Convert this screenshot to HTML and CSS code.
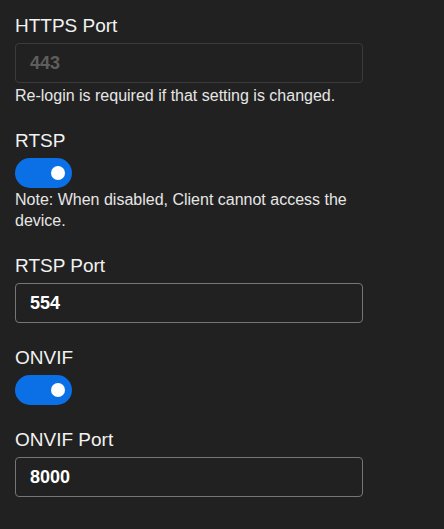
FILE: index.html
```html
<!DOCTYPE html>
<html lang="en">
<head>
<meta charset="utf-8">
<title>Network Ports</title>
<link rel="stylesheet" href="styles.css">
</head>
<body>
<form class="settings">
  <div class="group">
    <label class="label" for="https">HTTPS Port</label>
    <input class="field field-disabled" id="https" type="text" value="443" disabled>
    <p class="help">Re-login is required if that setting is changed.</p>
  </div>
  <div class="group">
    <div class="label">RTSP</div>
    <span class="switch"><span class="knob"></span></span>
    <p class="help help-note">Note: When disabled, Client cannot access the device.</p>
  </div>
  <div class="group">
    <label class="label" for="rtsp">RTSP Port</label>
    <input class="field" id="rtsp" type="text" value="554">
  </div>
  <div class="group">
    <div class="label">ONVIF</div>
    <span class="switch"><span class="knob"></span></span>
  </div>
  <div class="group">
    <label class="label" for="onvif">ONVIF Port</label>
    <input class="field" id="onvif" type="text" value="8000">
  </div>
</form>
</body>
</html>
```
FILE: styles.css
```css
html, body {
  margin: 0;
  padding: 0;
  background: #212121;
}
body {
  font-family: "Liberation Sans", Arial, sans-serif;
  color: #f2f2f2;
  width: 444px;
  height: 529px;
  overflow: hidden;
}
.settings {
  width: 348px;
  padding: 15px 0 0 15px;
  display: flex;
  flex-direction: column;
  gap: 24px;
}
.group {
  display: flex;
  flex-direction: column;
  align-items: flex-start;
}
.label {
  display: block;
  font-size: 19px;
  line-height: 22px;
  color: #f2f2f2;
  margin-bottom: 6px;
}
.field {
  box-sizing: border-box;
  width: 348px;
  height: 40px;
  margin: 0;
  padding: 0 14px;
  background: #212121;
  border: 1px solid #767676;
  border-radius: 4px;
  color: #ffffff;
  font-family: "Liberation Sans", Arial, sans-serif;
  font-size: 18px;
  font-weight: bold;
  outline: none;
}
.field-disabled {
  border-color: #3b3b3b;
  color: #5e5e5e;
  -webkit-text-fill-color: #5e5e5e;
  opacity: 1;
}
.help {
  margin: 3px 0 0;
  font-size: 16px;
  line-height: 20px;
  color: #e6e6e6;
}
.help-note {
  margin-top: 1px;
  line-height: 21px;
}
.switch {
  position: relative;
  display: block;
  width: 57px;
  height: 30px;
  border-radius: 15px;
  background: #0b6fe6;
}
.knob {
  position: absolute;
  top: 8px;
  left: 36px;
  width: 14px;
  height: 14px;
  border-radius: 50%;
  background: #ffffff;
}
```
